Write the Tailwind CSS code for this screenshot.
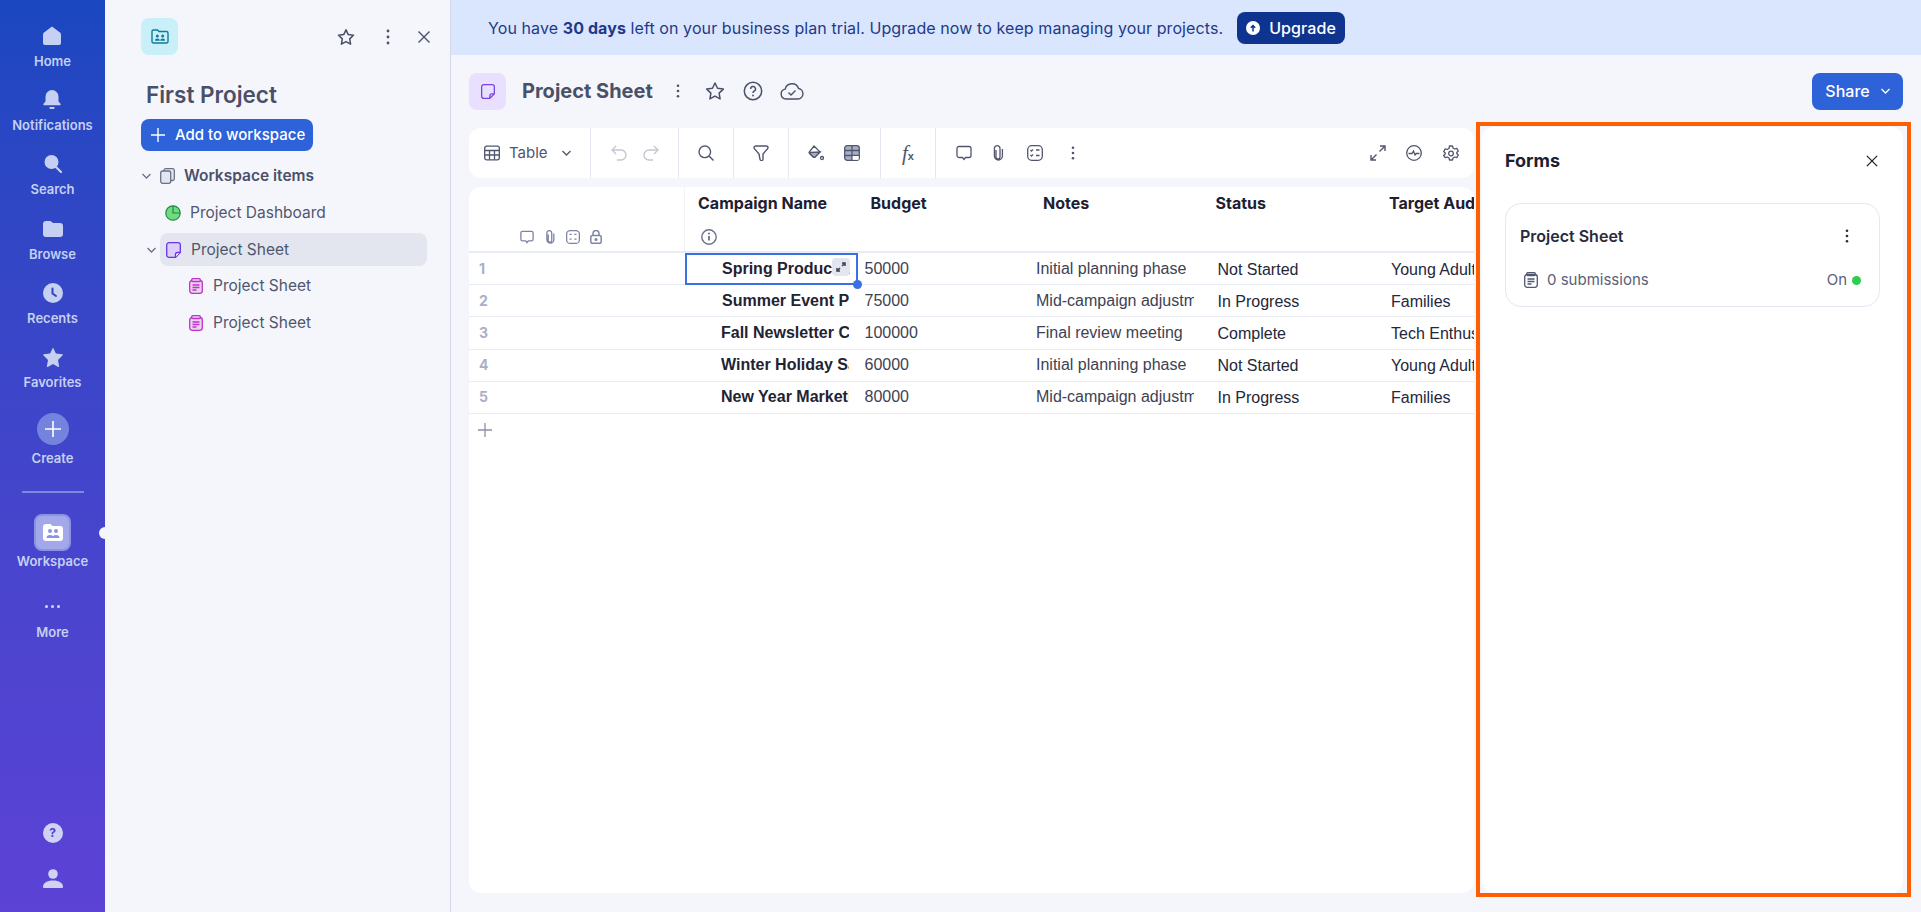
<!DOCTYPE html>
<html lang="en">
<head>
  <meta charset="UTF-8">
  <title>Project Sheet</title>
  <script src="https://cdn.jsdelivr.net/npm/@tailwindcss/browser@4"></script>
</head>
<body class="h-[912px] overflow-hidden bg-[#f5f6fb] font-['Inter',sans-serif] text-[#4a5068]">
<div class="flex h-[912px]">

  <!-- App rail -->
  <nav class="relative flex h-full w-[105px] shrink-0 flex-col items-center bg-gradient-to-b from-[#1a47c0] to-[#5c42d6] pt-[26px] text-[13px] font-semibold leading-4 text-[#c5d0f2]">
    <div class="flex h-[64.2px] flex-col items-center">
      <svg class="h-5 w-5" viewBox="0 0 20 20" fill="currentColor"><path d="M10 .5 18 6.500a3 3 0 0 1 1 2.200V17a2 2 0 0 1-2 2H3a2 2 0 0 1-2-2V8.700a3 3 0 0 1 1-2.200z"/></svg>
      <span class="mt-[7px]">Home</span>
    </div>
    <div class="flex h-[64.2px] flex-col items-center">
      <svg class="h-5 w-5" viewBox="0 0 20 20" fill="currentColor"><path d="M10 0a6.500 6.500 0 0 1 6.500 6.500v5l2 2.200a1 1 0 0 1-.8 1.600H2.300a1 1 0 0 1-.8-1.600l2-2.200v-5A6.500 6.500 0 0 1 10 0zM7.500 17h5v1a1 1 0 0 1-1 1h-3a1 1 0 0 1-1-1z"/></svg>
      <span class="mt-[7px]">Notifications</span>
    </div>
    <div class="flex h-[64.2px] flex-col items-center">
      <svg class="h-5 w-5" viewBox="0 0 20 20" fill="currentColor"><circle cx="8.500" cy="8" r="7"/><path d="M13 13l5 5" stroke="currentColor" stroke-width="2.200" stroke-linecap="round"/></svg>
      <span class="mt-[7px]">Search</span>
    </div>
    <div class="flex h-[64.2px] flex-col items-center">
      <svg class="h-5 w-5" viewBox="0 0 20 20" fill="currentColor"><path d="M3 2h4.500l2.500 2h7a3 3 0 0 1 3 3v8a3 3 0 0 1-3 3H3a3 3 0 0 1-3-3V5a3 3 0 0 1 3-3z"/></svg>
      <span class="mt-[7px]">Browse</span>
    </div>
    <div class="flex h-[64.2px] flex-col items-center">
      <svg class="h-5 w-5" viewBox="0 0 20 20"><circle cx="10" cy="10" r="10" fill="currentColor"/><path d="M9.500 5.500v5l3.500 2.500" stroke="#2f43c4" stroke-width="2" fill="none" stroke-linecap="round"/></svg>
      <span class="mt-[7px]">Recents</span>
    </div>
    <div class="flex h-[64.2px] flex-col items-center">
      <svg class="h-5 w-5" viewBox="0 0 20 20" fill="currentColor"><path d="M10 .5l2.900 5.900 6.500.9a.6.6 0 0 1 .3 1l-4.700 4.600 1.100 6.400a.6.6 0 0 1-.9.6L10 16.900l-5.200 3a.6.6 0 0 1-.9-.6L5 12.900.3 8.300a.6.6 0 0 1 .3-1l6.500-.9z"/></svg>
      <span class="mt-[7px]">Favorites</span>
    </div>
    <div class="mt-[2px] flex h-8 w-8 items-center justify-center rounded-full bg-[#7484de]">
      <svg class="h-5 w-5" viewBox="0 0 20 20" stroke="white" stroke-width="1.600"><path d="M10 2v16M2 10h16"/></svg>
    </div>
    <span class="mt-[5px]">Create</span>
    <div class="mt-[25px] h-[2px] w-[62px] bg-[#7f88dc]"></div>
    <div class="mt-[21px] flex h-[37px] w-[37px] items-center justify-center rounded-lg border-2 border-[#8b93e4] bg-[#a2a8ea]">
      <svg class="h-[17px] w-5" viewBox="0 0 20 17"><path d="M3 0h4.500l2 2H17a3 3 0 0 1 3 3v9a3 3 0 0 1-3 3H3a3 3 0 0 1-3-3V3a3 3 0 0 1 3-3z" fill="white"/><circle cx="7" cy="7" r="2" fill="#8b93e4"/><circle cx="13" cy="7" r="2" fill="#8b93e4"/><path d="M3.500 14a3.500 3 0 0 1 7 0zM9.500 14a3.500 3 0 0 1 7 0z" fill="#8b93e4"/></svg>
    </div>
    <span class="mt-[2px]">Workspace</span>
    <div class="mt-[34px] flex h-[6px] items-center gap-[3px]">
      <span class="h-[3px] w-[3px] rounded-full bg-[#d5daf5]"></span>
      <span class="h-[3px] w-[3px] rounded-full bg-[#d5daf5]"></span>
      <span class="h-[3px] w-[3px] rounded-full bg-[#d5daf5]"></span>
    </div>
    <span class="mt-[15px]">More</span>
    <div class="mt-auto flex h-5 w-5 items-center justify-center rounded-full bg-[#d0d2f5] text-[12px] font-bold text-[#5240d0]">?</div>
    <svg class="mb-[23px] mt-[26px] h-5 w-5" viewBox="0 0 20 20" fill="#d0d2f5"><circle cx="10" cy="5" r="4.800"/><path d="M1 19a1 1 0 0 1-1-1c0-4 4-6.500 10-6.500S20 14 20 18a1 1 0 0 1-1 1z"/></svg>
    <div class="absolute left-[99px] top-[527px] h-3 w-[6px] rounded-l-full bg-[#f5f6fb]"></div>
  </nav>

  <!-- Workspace panel -->
  <aside class="h-full w-[346px] shrink-0 border-r border-[#d5d8e6] pl-9 pt-[18px]">
    <div class="flex h-[37px] items-center">
      <div class="flex h-[37px] w-[37px] items-center justify-center rounded-lg bg-[#c9f0f9]">
        <svg class="h-[15px] w-[18px]" viewBox="0 0 18 15" fill="none" stroke="#0f7a9c" stroke-width="1.400"><path d="M2.500 1h4l1.500 1.500h7.500a1.500 1.500 0 0 1 1.500 1.500v8.500a1.500 1.500 0 0 1-1.500 1.500h-13A1.500 1.500 0 0 1 1 12.500v-10A1.500 1.500 0 0 1 2.500 1z"/><g fill="#0f7a9c" stroke="none"><circle cx="6.300" cy="7" r="1.500"/><circle cx="11.700" cy="7" r="1.500"/><path d="M3.800 11.800a2.500 2.300 0 0 1 5 0zM9.200 11.800a2.500 2.300 0 0 1 5 0z"/></g></svg>
      </div>
      <svg class="ml-[159px] h-[18px] w-[18px]" viewBox="0 0 20 20" fill="none" stroke="#4a5068" stroke-width="1.700" stroke-linejoin="round"><path d="M10 2l2.500 5.300 5.800.8-4.200 4 1 5.800L10 15.100 4.900 17.900l1-5.800-4.200-4 5.800-.8z"/></svg>
      <svg class="ml-[31px] h-[16px] w-1" viewBox="0 0 4 16" fill="#4a5068"><circle cx="2" cy="2" r="1.400"/><circle cx="2" cy="8" r="1.400"/><circle cx="2" cy="14" r="1.400"/></svg>
      <svg class="ml-[27px] h-[14px] w-[14px]" viewBox="0 0 14 14" stroke="#4a5068" stroke-width="1.400"><path d="M1.500 1.500l11 11M12.500 1.500l-11 11"/></svg>
    </div>
    <h1 class="ml-[5px] mt-[26px] text-[22.5px] font-semibold leading-7 text-[#4a5068]">First Project</h1>
    <button class="mt-[10px] flex h-8 w-[172px] items-center rounded-lg bg-[#2d62d9] pl-[10px] text-[15px] font-medium text-white">
      <svg class="mr-[10px] h-[14px] w-[14px]" viewBox="0 0 14 14" stroke="white" stroke-width="1.400"><path d="M7 0v14M0 7h14"/></svg>
      Add to workspace
    </button>
    <div class="mt-[14px] flex h-[22px] items-center text-[15.5px] font-semibold">
      <svg class="ml-[1px] h-[6px] w-[9px]" viewBox="0 0 9 6" fill="none" stroke="#6a7088" stroke-width="1.300"><path d="M.5 1l4 4 4-4"/></svg>
      <svg class="ml-[9px] h-[16px] w-[15px]" viewBox="0 0 15 16" fill="#e3e6ef" stroke="#6a7088" stroke-width="1.300"><path d="M4 3V2.500A1.800 1.800 0 0 1 5.800.7h7a1.500 1.500 0 0 1 1.500 1.500v8.500a1.800 1.800 0 0 1-1.800 1.800h-1.800"/><rect x="0.700" y="3" width="10" height="12.300" rx="2"/></svg>
      <span class="ml-[9px]">Workspace items</span>
    </div>
    <div class="mt-[15px] flex h-[22px] items-center text-[15.5px] text-[#50566e]">
      <svg class="ml-[24px] h-4 w-4" viewBox="0 0 16 16"><circle cx="8" cy="8" r="7.200" fill="#6fdb85" stroke="#1f8a3a" stroke-width="1.200"/><path d="M8 1v7h7" fill="none" stroke="#1f8a3a" stroke-width="1.200"/></svg>
      <span class="ml-[9px]">Project Dashboard</span>
    </div>
    <div class="relative ml-[19px] mt-[9px] flex h-[33px] w-[267px] items-center rounded-lg bg-[#e3e6ef] text-[15.5px] text-[#50566e]">
      <svg class="absolute -left-[13px] h-[6px] w-[9px]" viewBox="0 0 9 6" fill="none" stroke="#6a7088" stroke-width="1.300"><path d="M.5 1l4 4 4-4"/></svg>
      <svg class="ml-[6px] h-4 w-[15px]" viewBox="0 0 15 16" fill="#dccdfb" stroke="#6a35e0" stroke-width="1.300"><path d="M3 .7h9A2.300 2.300 0 0 1 14.300 3v7.500L9.500 15.300H3A2.300 2.300 0 0 1 .7 13V3A2.300 2.300 0 0 1 3 .7z"/><path d="M9.500 15v-2.500a2 2 0 0 1 2-2H14" fill="#fff"/></svg>
      <span class="ml-[10px]">Project Sheet</span>
    </div>
    <div class="ml-[48px] mt-[9px] flex h-[22px] items-center text-[15.5px] text-[#50566e]">
      <svg class="h-4 w-[14px]" viewBox="0 0 14 16" fill="#f0d0f2" stroke="#b936c8" stroke-width="1.300"><rect x="0.700" y="2.500" width="12.600" height="12.800" rx="2.500"/><rect x="2.700" y="0.700" width="8.600" height="2.800" rx="1"/><path d="M3.500 7h7M3.500 9.500h7M3.500 12h4" fill="none"/></svg>
      <span class="ml-[10px]">Project Sheet</span>
    </div>
    <div class="ml-[48px] mt-[15px] flex h-[22px] items-center text-[15.5px] text-[#50566e]">
      <svg class="h-4 w-[14px]" viewBox="0 0 14 16" fill="#f0d0f2" stroke="#b936c8" stroke-width="1.300"><rect x="0.700" y="2.500" width="12.600" height="12.800" rx="2.500"/><rect x="2.700" y="0.700" width="8.600" height="2.800" rx="1"/><path d="M3.500 7h7M3.500 9.500h7M3.500 12h4" fill="none"/></svg>
      <span class="ml-[10px]">Project Sheet</span>
    </div>
  </aside>

  <!-- Main -->
  <main class="flex h-full min-w-0 flex-1 flex-col">
    <div class="flex h-[55px] shrink-0 items-center bg-[#d9e6fd] pl-[37px] text-[16px] tracking-[0.09px] text-[#1e3a8a]">
      <p>You have <b class="font-bold">30 days</b> left on your business plan trial. Upgrade now to keep managing your projects.</p>
      <button class="ml-[14px] flex h-8 w-[108px] items-center rounded-lg bg-[#0f3490] pl-[9px] font-medium text-white">
        <svg class="mr-[9px] h-[14px] w-[14px]" viewBox="0 0 14 14"><circle cx="7" cy="7" r="7" fill="white"/><path d="M7 10.500V5M4.800 6.800 7 4.500l2.200 2.300" stroke="#0f3490" stroke-width="1.500" fill="none"/></svg>
        Upgrade
      </button>
    </div>

    <div class="flex h-[73px] shrink-0 items-center pb-[1px] pl-[18px] pr-[18px]">
      <div class="flex h-[37px] w-[37px] items-center justify-center rounded-lg bg-[#e9dffe]">
        <svg class="h-[15px] w-[14px]" viewBox="0 0 15 16" fill="none" stroke="#7a45e8" stroke-width="1.400"><path d="M3 .7h9A2.300 2.300 0 0 1 14.300 3v7.500L9.500 15.300H3A2.300 2.300 0 0 1 .7 13V3A2.300 2.300 0 0 1 3 .7z"/><path d="M9.500 15v-2.500a2 2 0 0 1 2-2H14"/></svg>
      </div>
      <h2 class="ml-[16px] text-[20px] font-bold leading-7 text-[#4a5068]">Project Sheet</h2>
      <svg class="ml-[23px] h-[14px] w-1" viewBox="0 0 4 14" fill="#4a5068"><circle cx="2" cy="1.800" r="1.300"/><circle cx="2" cy="7" r="1.300"/><circle cx="2" cy="12.200" r="1.300"/></svg>
      <svg class="ml-[25px] h-[20px] w-[20px]" viewBox="0 0 20 20" fill="none" stroke="#4a5068" stroke-width="1.500" stroke-linejoin="round"><path d="M10 2l2.500 5.300 5.800.8-4.200 4 1 5.800L10 15.100 4.900 17.900l1-5.800-4.200-4 5.800-.8z"/></svg>
      <svg class="ml-[18px] h-[20px] w-[20px]" viewBox="0 0 20 20" fill="none" stroke="#4a5068" stroke-width="1.500"><circle cx="10" cy="10" r="8.700"/><path d="M7.700 8a2.400 2.400 0 1 1 3.500 2.100c-.8.500-1.200 1-1.200 1.900"/><circle cx="10" cy="14.500" r=".9" fill="#4a5068" stroke="none"/></svg>
      <svg class="ml-[17px] h-[18px] w-[24px]" viewBox="0 0 24 18" fill="none" stroke="#4a5068" stroke-width="1.400"><path d="M6 17a5 5 0 0 1-.8-9.900A7 7 0 0 1 18.600 6.500 5.300 5.300 0 0 1 18 17z"/><path d="M8.500 10.500l2.500 2.500 4.500-4.500"/></svg>
      <button class="ml-auto flex h-[37px] w-[91px] items-center justify-center gap-[11px] rounded-lg bg-[#2d62d9] text-[16px] font-medium text-white">
        Share
        <svg class="h-[6px] w-[9px]" viewBox="0 0 9 6" fill="none" stroke="white" stroke-width="1.300"><path d="M.5 1l4 4 4-4"/></svg>
      </button>
    </div>

    <div class="flex min-h-0 pl-[18px]">
      <div class="flex w-[1005px] shrink-0 flex-col">
        <!-- Toolbar -->
        <div class="flex h-[50px] items-stretch rounded-xl bg-white text-[15px] text-[#50566e]">
          <div class="flex w-[122px] items-center border-r border-[#e5e7f0] pl-[15px]">
            <svg class="h-4 w-4" viewBox="0 0 16 16" fill="none" stroke="#50566e" stroke-width="1.300"><rect x=".7" y="1.200" width="14.600" height="13.600" rx="2"/><path d="M.7 5.500h14.600M.7 10h14.600M5.500 5.500v9.300M10.500 5.500v9.300"/></svg>
            <span class="ml-[9px]">Table</span>
            <svg class="ml-[14px] h-[6px] w-[9px]" viewBox="0 0 9 6" fill="none" stroke="#50566e" stroke-width="1.300"><path d="M.5 1l4 4 4-4"/></svg>
          </div>
          <div class="flex w-[88px] items-center gap-4 border-r border-[#e5e7f0] pl-[20px]">
            <svg class="h-4 w-4" viewBox="0 0 16 16" fill="none" stroke="#c3c7d3" stroke-width="1.400"><path d="M5 1 1 5l4 4"/><path d="M1 5h9a5 5 0 0 1 0 10H6"/></svg>
            <svg class="h-4 w-4" viewBox="0 0 16 16" fill="none" stroke="#c3c7d3" stroke-width="1.400"><path d="M11 1l4 4-4 4"/><path d="M15 5H6a5 5 0 0 0 0 10h4"/></svg>
          </div>
          <div class="flex w-[55px] items-center justify-center border-r border-[#e5e7f0]">
            <svg class="h-4 w-4" viewBox="0 0 16 16" fill="none" stroke="#50566e" stroke-width="1.400"><circle cx="6.800" cy="6.800" r="5.800"/><path d="M11 11l4.500 4.500"/></svg>
          </div>
          <div class="flex w-[55px] items-center justify-center border-r border-[#e5e7f0]">
            <svg class="h-4 w-4" viewBox="0 0 16 16" fill="none" stroke="#50566e" stroke-width="1.400" stroke-linejoin="round"><path d="M1 2.500C1 1.500 2 1 3 1h10c1 0 2 .5 2 1.500 0 .5-.2 1-.6 1.400L10 9v5a1.500 1.500 0 0 1-3 .3L6 9 1.600 3.900C1.200 3.500 1 3 1 2.500z"/></svg>
          </div>
          <div class="flex w-[92px] items-center gap-5 border-r border-[#e5e7f0] pl-[19px]">
            <svg class="h-4 w-4" viewBox="0 0 16 16" fill="none" stroke="#50566e" stroke-width="1.300"><path d="M6 1 12 7l-5 5a1.200 1.200 0 0 1-1.700 0L1.500 8.200a1 1 0 0 1 0-1.500z"/><path d="M1.500 7.500 12 7 7 12a1.200 1.200 0 0 1-1.700 0L1.500 8.200z" fill="#a9afc3"/><circle cx="14" cy="13" r="1.500"/></svg>
            <svg class="h-4 w-4" viewBox="0 0 16 16"><rect x=".7" y=".7" width="14.600" height="14.600" rx="2.500" fill="#a9afc3" stroke="#50566e" stroke-width="1.300"/><path d="M.7 5.500h14.600M.7 10.500h14.600M8 .7v14.600" stroke="#50566e" stroke-width="1.300"/><rect x="8.700" y="11" width="6" height="3.800" fill="#fff"/></svg>
          </div>
          <div class="flex w-[55px] items-center justify-center border-r border-[#e5e7f0]">
            <span class="font-['Liberation_Serif',serif] text-[21px] italic leading-none text-[#50566e]">f<span class="font-['Liberation_Sans',sans-serif] text-[11px] font-bold not-italic">x</span></span>
          </div>
          <div class="flex items-center pl-[20px]">
            <svg class="h-4 w-4" viewBox="0 0 16 16" fill="none" stroke="#50566e" stroke-width="1.300"><path d="M3 1.500h10A2 2 0 0 1 15 3.500v7a2 2 0 0 1-2 2H9.500L8 14.500 6.500 12.500H3a2 2 0 0 1-2-2v-7a2 2 0 0 1 2-2z"/></svg>
            <svg class="ml-[20px] h-4 w-[12px]" viewBox="0 0 12 16" fill="none" stroke="#50566e" stroke-width="1.300"><path d="M4 5v7a2 2 0 0 0 4 0V3.500a2.800 2.800 0 0 0-5.600 0V11a4 4 0 0 0 8 0V4"/></svg>
            <svg class="ml-[23px] h-4 w-4" viewBox="0 0 16 16" fill="none" stroke="#50566e" stroke-width="1.300"><rect x=".7" y=".7" width="14.600" height="14.600" rx="4"/><path d="M3.500 5l1 1 1.500-1.500M9 5h3.500M3.500 10l1 1 1.500-1.500M9 10.500h3.500"/></svg>
            <svg class="ml-[28px] h-[14px] w-1" viewBox="0 0 4 14" fill="#50566e"><circle cx="2" cy="1.800" r="1.300"/><circle cx="2" cy="7" r="1.300"/><circle cx="2" cy="12.200" r="1.300"/></svg>
          </div>
          <div class="ml-auto flex items-center pr-[15px]">
            <svg class="h-4 w-4" viewBox="0 0 16 16" fill="none" stroke="#50566e" stroke-width="1.400"><path d="M10 1h5v5M15 1 9.500 6.500M6 15H1v-5M1 15l5.500-5.500"/></svg>
            <svg class="ml-[20px] h-4 w-4" viewBox="0 0 16 16" fill="none" stroke="#50566e" stroke-width="1.300"><circle cx="8" cy="8" r="7.300"/><path d="M2.500 8.500H6L7.500 6 9 10l1.200-1.500H13.500"/></svg>
            <svg class="ml-[21px] h-4 w-4" viewBox="0 0 16 16" fill="none" stroke="#50566e" stroke-width="1.300" stroke-linejoin="round"><path d="M6.500 1h3l.5 2 1.800 1 2-.6 1.500 2.600-1.500 1.500v1l1.500 1.500-1.500 2.600-2-.6-1.800 1-.5 2h-3l-.5-2-1.800-1-2 .6L.7 10.500 2.200 9V8L.7 6.500 2.200 3.900l2 .6 1.800-1z"/><circle cx="8" cy="8.500" r="2.300"/></svg>
          </div>
        </div>

        <!-- Sheet -->
        <div class="mt-[9px] h-[706px] overflow-hidden rounded-xl bg-white">
          <div class="grid h-[66px] grid-cols-[216px_172.5px_172.5px_172.5px_172.5px_99px] border-b-2 border-[#e9ebf4] text-[16px] font-bold text-[#1c2030]">
            <div class="flex items-end justify-end border-r border-[#f3f4f9] pb-[7px] pr-[81px]">
              <div class="flex items-center gap-[9px]">
                <svg class="h-[14px] w-[14px]" viewBox="0 0 16 16" fill="none" stroke="#7e85a3" stroke-width="1.500"><path d="M3 1.500h10A2 2 0 0 1 15 3.500v7a2 2 0 0 1-2 2H9.500L8 14.500 6.500 12.500H3a2 2 0 0 1-2-2v-7a2 2 0 0 1 2-2z"/></svg>
                <svg class="h-[14px] w-[14px]" viewBox="0 0 12 16" fill="none" stroke="#7e85a3" stroke-width="1.500"><path d="M4 5v7a2 2 0 0 0 4 0V3.500a2.800 2.800 0 0 0-5.600 0V11a4 4 0 0 0 8 0V4"/></svg>
                <svg class="h-[14px] w-[14px]" viewBox="0 0 16 16" fill="none" stroke="#7e85a3" stroke-width="1.500"><rect x=".7" y=".7" width="14.600" height="14.600" rx="4"/><path d="M4 5h2.500M9.500 5H12M4 10.500h2.500M9.500 10.500H12"/></svg>
                <svg class="h-[14px] w-[14px]" viewBox="0 0 12 14" fill="none" stroke="#7e85a3" stroke-width="1.500"><rect x=".8" y="5.500" width="10.400" height="7.800" rx="1.500"/><path d="M3 5.500V3.500a3 3 0 0 1 6 0v2"/><circle cx="6" cy="9.500" r=".8" fill="#7e85a3"/></svg>
              </div>
            </div>
            <div class="flex flex-col pl-[13px] pt-[6px]">
              <span class="leading-[20px]">Campaign Name</span>
              <svg class="ml-[3px] mt-[16px] h-4 w-4" viewBox="0 0 16 16" fill="none" stroke="#6a7088" stroke-width="1.400"><circle cx="8" cy="8" r="7.200"/><path d="M8 7v4.500" stroke-width="1.800"/><circle cx="8" cy="4.500" r="1" fill="#6a7088" stroke="none"/></svg>
            </div>
            <div class="pl-[13px] pt-[6px] leading-[20px]">Budget</div>
            <div class="pl-[13px] pt-[6px] leading-[20px]">Notes</div>
            <div class="pl-[13px] pt-[6px] leading-[20px]">Status</div>
            <div class="overflow-hidden whitespace-nowrap pl-[14px] pt-[6px] leading-[20px]">Target Audience</div>
          </div>

          <!-- Rows -->
          <div class="grid h-[32.2px] grid-cols-[216px_172.5px_172.5px_172.5px_172.5px_99px] items-center border-b border-[#e9ebf4] font-['Liberation_Sans',sans-serif] text-[16px] leading-5 text-[#3d4254]">
            <div class="pl-[10px] font-['Inter',sans-serif] text-[14px] font-bold text-[#a9afc9]">1</div>
            <div class="relative flex h-[32.2px] items-center border-2 border-[#3b6fe6] pl-[35px] pr-[6px] font-bold text-[#1f2333]">
              <div class="overflow-hidden whitespace-nowrap">Spring Product Launch</div>
              <span class="absolute right-[6px] top-[3px] flex h-[18px] w-[18px] items-center justify-center rounded bg-[#e3e6ef]">
                <svg class="h-[10px] w-[10px]" viewBox="0 0 10 10" fill="none" stroke="#3d4254" stroke-width="1.500"><path d="M6 1h3v3M9 1 6 4M4 9H1V6M1 9l3-3"/></svg>
              </span>
              <span class="absolute -bottom-[6px] -right-[6px] h-[9px] w-[9px] rounded-full bg-[#3b6fe6]"></span>
            </div>
            <div class="pl-[7px]">50000</div>
            <div class="pl-[6px] pr-[9px]"><div class="overflow-hidden whitespace-nowrap">Initial planning phase</div></div>
            <div class="overflow-hidden whitespace-nowrap pl-[15px] pt-[2px] text-[#23273a]">Not Started</div>
            <div class="overflow-hidden whitespace-nowrap pl-[16px] pt-[2px] text-[#23273a]">Young Adults</div>
          </div>
          <div class="grid h-[32.2px] grid-cols-[216px_172.5px_172.5px_172.5px_172.5px_99px] items-center border-b border-[#e9ebf4] font-['Liberation_Sans',sans-serif] text-[16px] leading-5 text-[#3d4254]">
            <div class="pl-[10px] font-['Inter',sans-serif] text-[14px] font-bold text-[#a9afc9]">2</div>
            <div class="pl-[37px] pr-[9px] font-bold text-[#1f2333]"><div class="overflow-hidden whitespace-nowrap">Summer Event Promo</div></div>
            <div class="pl-[7px]">75000</div>
            <div class="pl-[6px] pr-[9px]"><div class="overflow-hidden whitespace-nowrap">Mid-campaign adjustment</div></div>
            <div class="overflow-hidden whitespace-nowrap pl-[15px] pt-[2px] text-[#23273a]">In Progress</div>
            <div class="overflow-hidden whitespace-nowrap pl-[16px] pt-[2px] text-[#23273a]">Families</div>
          </div>
          <div class="grid h-[32.2px] grid-cols-[216px_172.5px_172.5px_172.5px_172.5px_99px] items-center border-b border-[#e9ebf4] font-['Liberation_Sans',sans-serif] text-[16px] leading-5 text-[#3d4254]">
            <div class="pl-[10px] font-['Inter',sans-serif] text-[14px] font-bold text-[#a9afc9]">3</div>
            <div class="pl-[36px] pr-[9px] font-bold text-[#1f2333]"><div class="overflow-hidden whitespace-nowrap">Fall Newsletter Campaign</div></div>
            <div class="pl-[7px]">100000</div>
            <div class="pl-[6px] pr-[9px]"><div class="overflow-hidden whitespace-nowrap">Final review meeting</div></div>
            <div class="overflow-hidden whitespace-nowrap pl-[15px] pt-[2px] text-[#23273a]">Complete</div>
            <div class="overflow-hidden whitespace-nowrap pl-[16px] pt-[2px] text-[#23273a]">Tech Enthusiasts</div>
          </div>
          <div class="grid h-[32.2px] grid-cols-[216px_172.5px_172.5px_172.5px_172.5px_99px] items-center border-b border-[#e9ebf4] font-['Liberation_Sans',sans-serif] text-[16px] leading-5 text-[#3d4254]">
            <div class="pl-[10px] font-['Inter',sans-serif] text-[14px] font-bold text-[#a9afc9]">4</div>
            <div class="pl-[36px] pr-[9px] font-bold text-[#1f2333]"><div class="overflow-hidden whitespace-nowrap">Winter Holiday Sale</div></div>
            <div class="pl-[7px]">60000</div>
            <div class="pl-[6px] pr-[9px]"><div class="overflow-hidden whitespace-nowrap">Initial planning phase</div></div>
            <div class="overflow-hidden whitespace-nowrap pl-[15px] pt-[2px] text-[#23273a]">Not Started</div>
            <div class="overflow-hidden whitespace-nowrap pl-[16px] pt-[2px] text-[#23273a]">Young Adults</div>
          </div>
          <div class="grid h-[32.2px] grid-cols-[216px_172.5px_172.5px_172.5px_172.5px_99px] items-center border-b border-[#e9ebf4] font-['Liberation_Sans',sans-serif] text-[16px] leading-5 text-[#3d4254]">
            <div class="pl-[10px] font-['Inter',sans-serif] text-[14px] font-bold text-[#a9afc9]">5</div>
            <div class="pl-[36px] pr-[9px] font-bold text-[#1f2333]"><div class="overflow-hidden whitespace-nowrap">New Year Marketing</div></div>
            <div class="pl-[7px]">80000</div>
            <div class="pl-[6px] pr-[9px]"><div class="overflow-hidden whitespace-nowrap">Mid-campaign adjustment</div></div>
            <div class="overflow-hidden whitespace-nowrap pl-[15px] pt-[2px] text-[#23273a]">In Progress</div>
            <div class="overflow-hidden whitespace-nowrap pl-[16px] pt-[2px] text-[#23273a]">Families</div>
          </div>
          <svg class="ml-[9px] mt-[9px] h-[14px] w-[14px]" viewBox="0 0 14 14" stroke="#8a90a8" stroke-width="1.300"><path d="M7 0v14M0 7h14"/></svg>
        </div>
      </div>

      <!-- Forms panel, outlined in orange -->
      <div class="-mt-[6px] ml-[2px] h-[775px] w-[435px] shrink-0 border-4 border-[#ff5f00] pb-0 pl-[2px] pr-[4px] pt-[1px]">
        <div class="h-full rounded-xl bg-white px-[23px] pt-[20px]">
          <div class="flex h-7 items-center justify-between">
            <h3 class="text-[18px] font-bold leading-7 text-[#1c2030]">Forms</h3>
            <svg class="mr-[2px] h-[12px] w-[12px]" viewBox="0 0 14 14" stroke="#1c2030" stroke-width="1.500"><path d="M1 1l12 12M13 1 1 13"/></svg>
          </div>
          <div class="mt-[28px] h-[104px] w-[375px] rounded-2xl border border-[#e5e7f2] px-[14px] pt-[22px]">
            <div class="flex h-5 items-center justify-between pr-[16px]">
              <span class="text-[16px] font-semibold text-[#272b3d]">Project Sheet</span>
              <svg class="h-[14px] w-1" viewBox="0 0 4 14" fill="#272b3d"><circle cx="2" cy="1.800" r="1.300"/><circle cx="2" cy="7" r="1.300"/><circle cx="2" cy="12.200" r="1.300"/></svg>
            </div>
            <div class="mt-[24px] flex h-5 items-center text-[15px] text-[#5a6078]">
              <svg class="ml-[4px] h-4 w-[14px]" viewBox="0 0 14 16" fill="none" stroke="#50566e" stroke-width="1.300"><rect x="0.700" y="2.500" width="12.600" height="12.800" rx="2.500"/><rect x="2.700" y="0.700" width="8.600" height="2.800" rx="1"/><path d="M3.500 7h7M3.500 9.500h7M3.500 12h4"/></svg>
              <span class="ml-[9px]">0 submissions</span>
              <span class="ml-auto">On</span>
              <span class="ml-[5px] mr-[4px] h-[9px] w-[9px] rounded-full bg-[#2ecc4f]"></span>
            </div>
          </div>
        </div>
      </div>
    </div>
  </main>
</div>
</body>
</html>
